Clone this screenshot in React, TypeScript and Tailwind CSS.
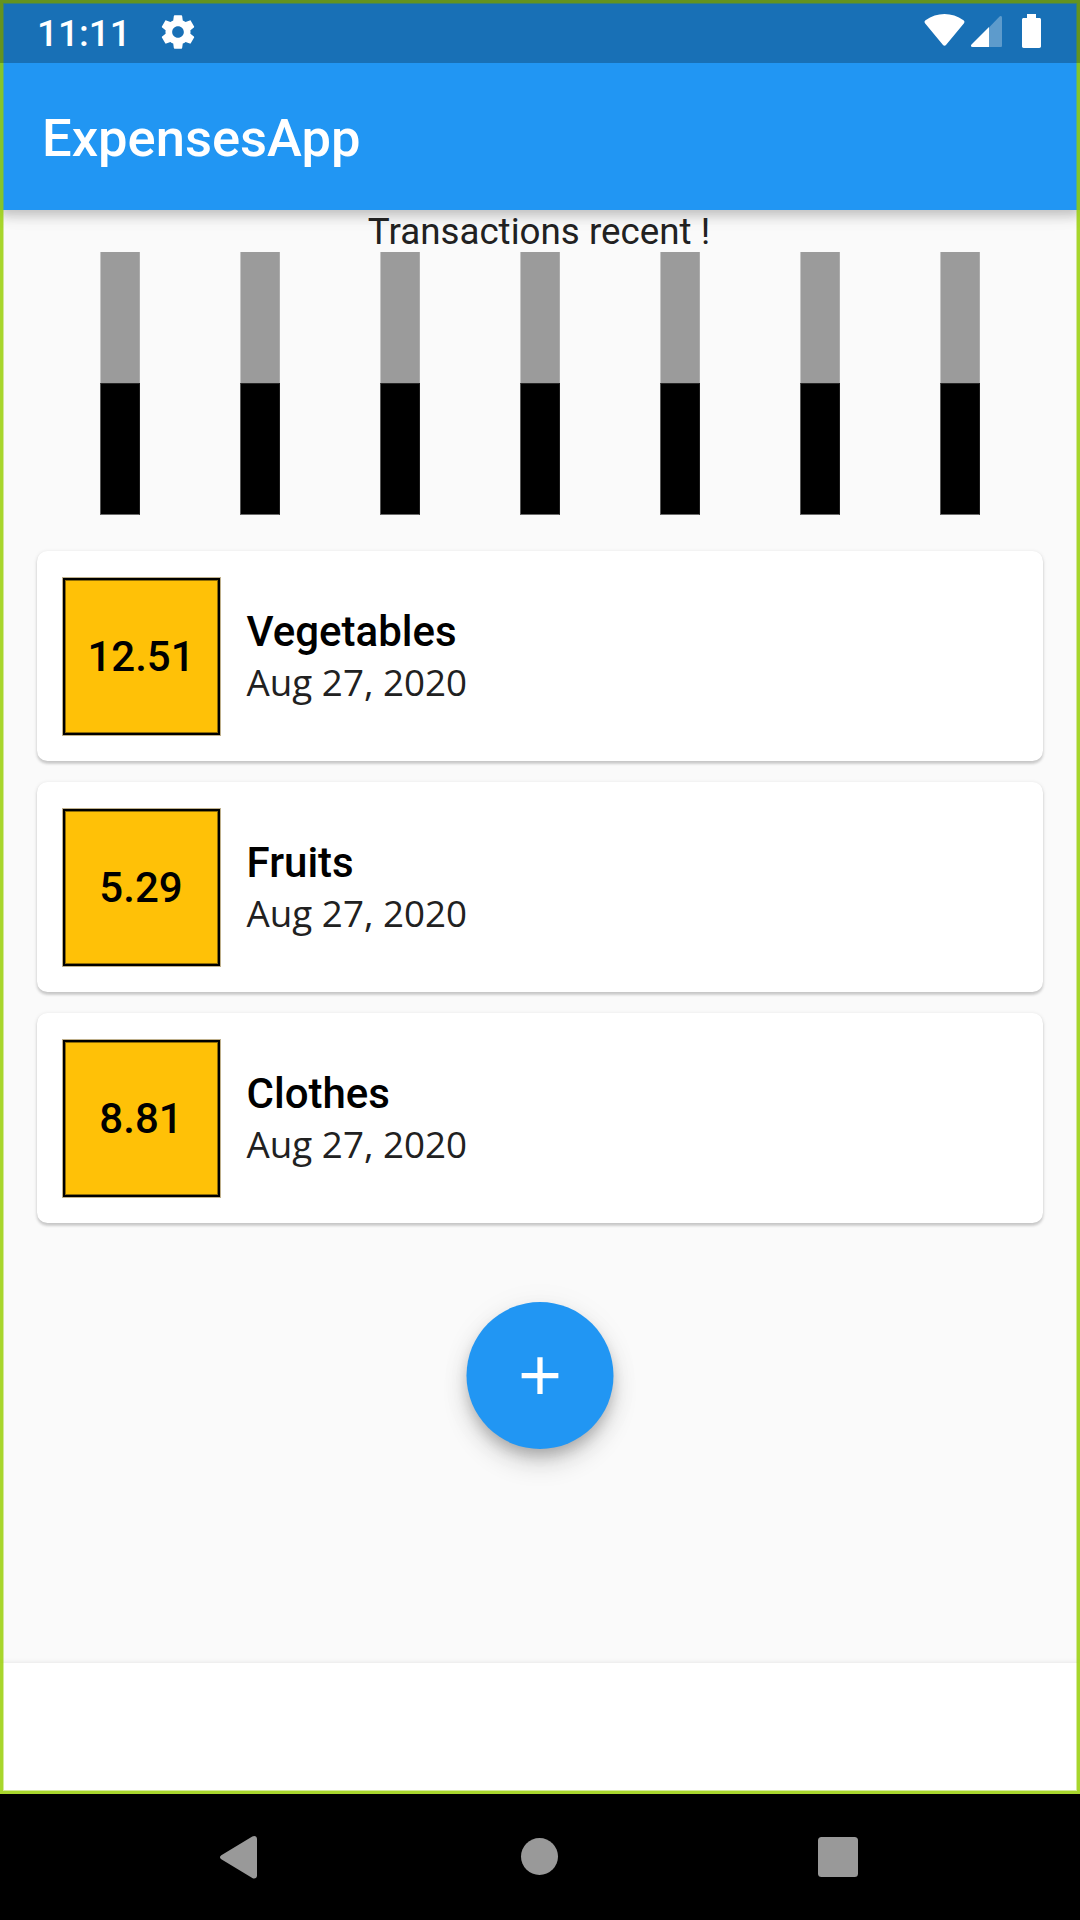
import React from "react";

const transactions = [
  { amount: "12.51", title: "Vegetables", date: "Aug 27, 2020" },
  { amount: "5.29", title: "Fruits", date: "Aug 27, 2020" },
  { amount: "8.81", title: "Clothes", date: "Aug 27, 2020" },
];

function StatusBar() {
  return (
    <div className="absolute inset-x-0 top-0 z-20 flex h-[63px] items-center bg-black/25 pl-[37px] pr-[38px] text-white">
      <span className="w-[93px] whitespace-nowrap pt-[4px] text-[37px] font-medium leading-[66px]">11:11</span>
      <svg className="ml-[28px] h-[40px] w-[40px]" viewBox="0 0 24 24" fill="currentColor">
        <path d="M19.43 12.98c.04-.32.07-.64.07-.98s-.03-.66-.07-.98l2.11-1.65c.19-.15.24-.42.12-.64l-2-3.46c-.12-.22-.39-.3-.61-.22l-2.49 1c-.52-.4-1.08-.73-1.69-.98l-.38-2.65C14.46 2.18 14.25 2 14 2h-4c-.25 0-.46.18-.49.42l-.38 2.65c-.61.25-1.17.59-1.69.98l-2.49-1c-.23-.09-.49 0-.61.22l-2 3.46c-.13.22-.07.49.12.64l2.11 1.65c-.04.32-.07.65-.07.98s.03.66.07.98l-2.11 1.65c-.19.15-.24.42-.12.64l2 3.46c.12.22.39.3.61.22l2.49-1c.52.4 1.08.73 1.69.98l.38 2.65c.03.24.24.42.49.42h4c.25 0 .46-.18.49-.42l.38-2.65c.61-.25 1.17-.59 1.69-.98l2.49 1c.23.09.49 0 .61-.22l2-3.46c.12-.22.07-.49-.12-.64l-2.11-1.65zM12 15.5c-1.93 0-3.5-1.57-3.5-3.5s1.57-3.5 3.5-3.5 3.5 1.57 3.5 3.5-1.57 3.5-3.5 3.5z" />
      </svg>
      <svg className="ml-auto h-[63px] w-[120px]" viewBox="922 0 120 63" fill="currentColor">
        <path d="M925.2 23.5c-1-1.2-.9-2.3.3-3.2C931.5 16.2 937.7 14 944.5 14s13 2.2 19 6.3c1.2.9 1.3 2 .3 3.2l-17.6 21.3c-1 1.2-2.4 1.2-3.4 0z" />
        <path opacity=".3" d="M989 27.5l10.3-10.8c1.2-1.2 2.7-.7 2.7 1V45.5c0 1-.5 1.5-1.5 1.5H989z" />
        <path d="M989 27v20h-16.5c-1.7 0-2-1.5-1-2.5z" />
        <path d="M1027 14h9v4h3.3c1.1 0 1.7.7 1.7 1.7v26.5c0 1-.7 1.7-1.7 1.7h-15.6c-1 0-1.7-.7-1.7-1.7V19.7c0-1 .7-1.7 1.7-1.7h3.3z" />
      </svg>
    </div>
  );
}

function AppBar() {
  return (
    <header className="relative flex h-[210px] shrink-0 flex-col bg-[#2196f3] pt-[63px] shadow-[0_5px_10px_rgba(0,0,0,0.17),0_10px_13px_rgba(0,0,0,0.05),0_3px_26px_rgba(0,0,0,0.04)]">
      <h1 className="pl-[42px] text-[52.5px] font-medium leading-[151px] text-white">ExpensesApp</h1>
    </header>
  );
}

function Chart() {
  return (
    <div className="flex h-[263px] justify-evenly">
      {Array.from({ length: 7 }, (_, day) => (
        <div key={day} className="flex w-[40px] flex-col">
          <div className="h-[131px] border-x border-l-[#c4c4c4] border-r-[#acacac] bg-[#9b9b9b]" />
          <div className="h-[132px] border border-t-[#262626] border-r-[#1a1a1a] border-b-[#6b6b6b] border-l-[#575757] bg-black" />
        </div>
      ))}
    </div>
  );
}

function TransactionCard({ amount, title, date }: (typeof transactions)[number]) {
  return (
    <li className="flex h-[210px] rounded-[10.5px] bg-white pl-[26px] pt-[27px] shadow-[0_2.6px_2.6px_rgba(0,0,0,0.14),0_1px_4px_rgba(0,0,0,0.12)]">
      <div className="flex h-[157px] w-[157px] items-center justify-center border-2 border-black bg-[#ffc107] pr-px text-[42px] font-medium text-black shadow-[0_0_0_1px_#bfb08c,inset_0_0_0_1px_#8f6c04]">
        {amount}
      </div>
      <div className="ml-[26.6px] flex flex-col pt-[29px]">
        <span className="text-[42px] font-medium leading-[49px] text-black">{title}</span>
        <span className="pt-px font-['Open_Sans'] text-[36.75px] font-[380] leading-[50px] text-[#212121]">{date}</span>
      </div>
    </li>
  );
}

function NavBar() {
  return (
    <nav className="flex h-[126px] shrink-0 bg-black text-[#999999]">
      <svg className="h-[126px] w-full" viewBox="0 0 1080 126" fill="currentColor">
        <path d="M221.3 61.2 252.3 42.5c2.4-1.3 4.7 0 4.7 2.5v36.5c0 2.5-2.3 3.8-4.7 2.5L221.3 65.2c-1.8-1.1-1.8-2.9 0-4z" />
        <circle cx="539.5" cy="62.5" r="18.5" />
        <rect x="818" y="43" width="40" height="40" rx="3.5" />
      </svg>
    </nav>
  );
}

export default function App() {
  return (
    <div className="flex h-[1920px] w-[1080px] flex-col overflow-hidden bg-black font-['Roboto',sans-serif]">
      <div className="relative flex h-[1794px] flex-col bg-[#fafafa]">
        <AppBar />
        <main className="relative flex flex-1 flex-col">
          <p className="h-[42px] pr-[2px] text-center text-[36.75px] leading-[43px] text-[#212121]">
            Transactions recent !
          </p>
          <Chart />
          <ul className="mx-[37px] mt-[36px] flex flex-col gap-[21px]">
            {transactions.map((t) => (
              <TransactionCard key={t.title} {...t} />
            ))}
          </ul>
          <button
            aria-label="Add transaction"
            className="mr-px mt-[79px] flex h-[147px] w-[147px] translate-x-[0.5px] items-center justify-center self-center rounded-full bg-[#2196f3] shadow-[0_8px_13px_-2px_rgba(0,0,0,0.2),0_15px_26px_rgba(0,0,0,0.14),0_3px_32px_rgba(0,0,0,0.05)]"
          >
            <svg className="h-[63px] w-[63px]" viewBox="0 0 24 24" fill="white">
              <path d="M19 13h-6v6h-2v-6H5v-2h6V5h2v6h6v2z" />
            </svg>
          </button>
        </main>
        <footer className="h-[131px] shrink-0 bg-white shadow-[0_0_5px_rgba(0,0,0,0.1)]" />
        <div className="pointer-events-none absolute inset-0 z-10 border-[3px] border-[#97ce03]/84">
          <div className="h-full w-full border border-[#97ce03]/40" />
        </div>
        <StatusBar />
      </div>
      <NavBar />
    </div>
  );
}
